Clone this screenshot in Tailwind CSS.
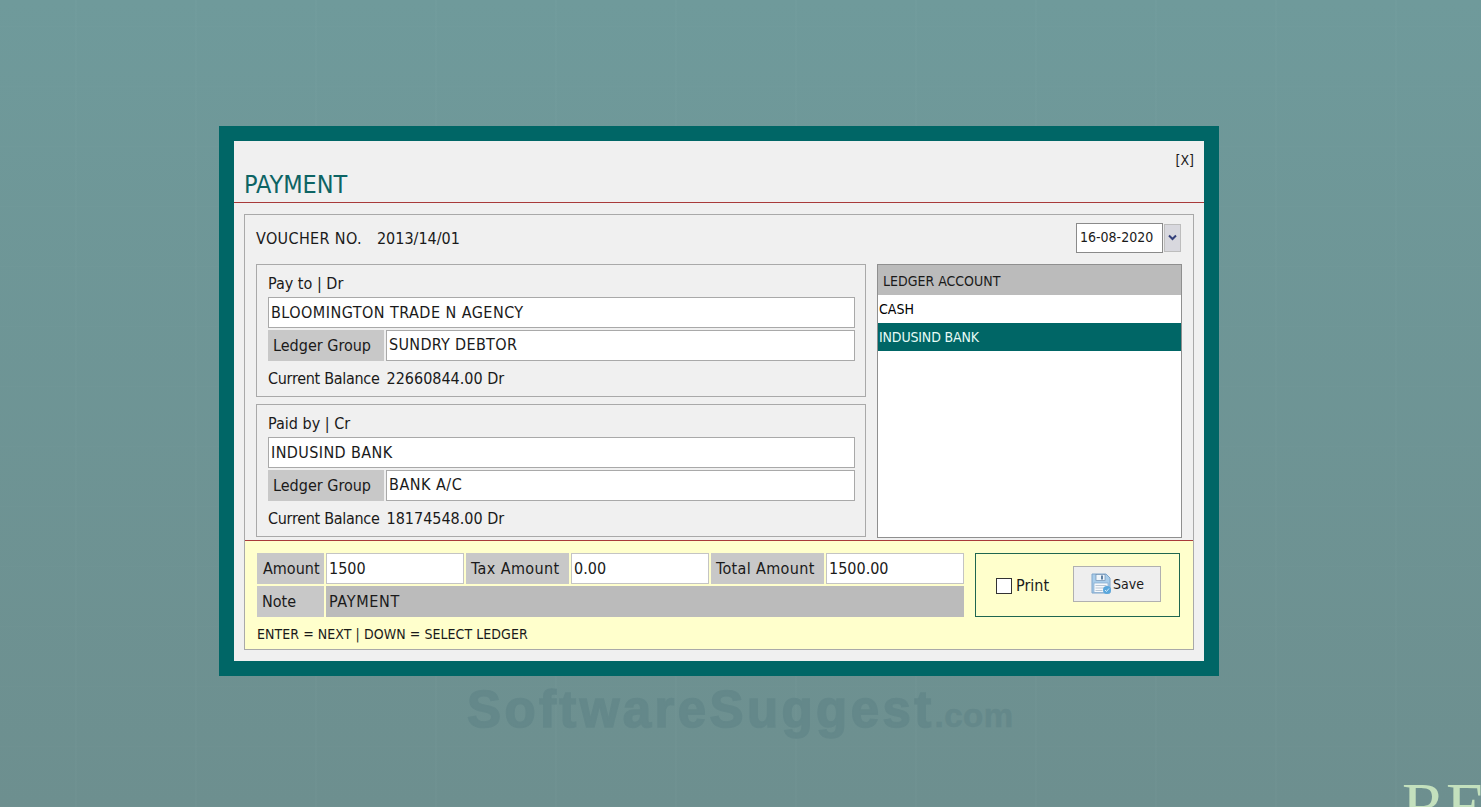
<!DOCTYPE html>
<html lang="en">
<head>
    <meta charset="UTF-8">
    <title>Payment</title>
    <script src="https://cdn.jsdelivr.net/npm/@tailwindcss/browser@4"></script>
</head>
<body class="relative w-[1481px] h-[807px] overflow-hidden bg-[linear-gradient(180deg,#6f9a9b,#6d8f8f)] pt-[126px] pl-[219px] font-['DejaVu_Sans_Condensed','Liberation_Sans',sans-serif] text-[16px] text-[#1a1a1a]">

    <!-- faint grid of the wallpaper -->
    <div class="absolute inset-0 bg-[repeating-linear-gradient(90deg,transparent_0,transparent_75px,#ffffff04_75px,#ffffff04_77px,transparent_77px,transparent_120px),repeating-linear-gradient(0deg,#ffffff03_0,#ffffff03_1px,transparent_1px,transparent_60px)]"></div>

    <!-- watermark -->
    <div class="absolute left-[467px] top-[677px] font-['Liberation_Sans',sans-serif] font-bold text-[#64888a] [-webkit-text-stroke:1.5px_#64888a] text-[51px] leading-[66px] tracking-[3.4px] whitespace-nowrap">SoftwareSuggest<span class="text-[33px] tracking-[0.5px] [-webkit-text-stroke:0.5px_#64888a]">.com</span></div>
    <div class="absolute left-[1402px] top-[773px] font-['Liberation_Serif',serif] text-[#c3e0bd] text-[66px] leading-[66px] whitespace-nowrap">RE</div>

    <!-- modal -->
    <div class="relative w-[1000px] h-[550px] border-[15px] border-[#006666] bg-[#f0f0f0] flex flex-col">
        <div class="h-[62px] shrink-0 border-b border-[#a83a3a] relative flex items-end px-[10px] pb-[1px]">
            <h1 class="text-[25px] leading-[32px] text-[#0d6464]">PAYMENT</h1>
            <span class="absolute right-[10px] top-[10px] text-[14px] leading-[18px]">[X]</span>
        </div>

        <div class="mx-[10px] mt-[11px] h-[436px] border border-[#a9a9a9] flex flex-col">
            <div class="flex-1 px-[11px] min-h-0">
                <div class="h-[49px] flex items-center pb-[2px]">
                    <span class="tracking-[0.36px]">VOUCHER NO.</span>
                    <span class="ml-[15px]">2013/14/01</span>
                    <div class="ml-auto mr-px mb-[2px] flex items-center">
                        <div class="w-[87px] h-[30px] border border-[#8a8a8a] bg-white flex items-center pl-[3px] text-[14px]">16-08-2020</div>
                        <div class="ml-px w-[17px] h-[28px] bg-[#d8d8de] border border-[#bdbdbd] flex items-center justify-center">
                            <svg width="9" height="7" viewBox="0 0 9 7" fill="none" stroke="#34407a" stroke-width="2"><path d="M1 1.5l3.5 3.5L8 1.5"/></svg>
                        </div>
                    </div>
                </div>

                <div class="flex gap-[11px]">
                    <div class="w-[610px] flex flex-col gap-[7px]">
                        <div class="h-[133px] border border-[#a9a9a9] pl-[11px] pr-[10px]">
                            <div class="h-[32px] flex items-end pb-px">Pay to | Dr</div>
                            <div class="h-[31px] border border-[#a9a9a9] bg-white flex items-center pl-[2px] tracking-[0.46px]">BLOOMINGTON TRADE N AGENCY</div>
                            <div class="mt-[2px] h-[31px] flex gap-[2px]">
                                <div class="w-[116px] bg-[#c8c8c8] flex items-center pl-[5px]">Ledger Group</div>
                                <div class="flex-1 border border-[#a9a9a9] bg-white flex items-center pl-[2px] pb-[2px] tracking-[0.32px]">SUNDRY DEBTOR</div>
                            </div>
                            <div class="h-[34px] flex items-center pt-[2px] tracking-[-0.3px]">Current Balance <span class="ml-[7px] tracking-normal">22660844.00 Dr</span></div>
                        </div>
                        <div class="h-[133px] border border-[#a9a9a9] pl-[11px] pr-[10px]">
                            <div class="h-[32px] flex items-end pb-px">Paid by | Cr</div>
                            <div class="h-[31px] border border-[#a9a9a9] bg-white flex items-center pl-[2px] tracking-[0.4px]">INDUSIND BANK</div>
                            <div class="mt-[2px] h-[31px] flex gap-[2px]">
                                <div class="w-[116px] bg-[#c8c8c8] flex items-center pl-[5px]">Ledger Group</div>
                                <div class="flex-1 border border-[#a9a9a9] bg-white flex items-center pl-[2px] pb-[2px] tracking-[0.5px]">BANK A/C</div>
                            </div>
                            <div class="h-[34px] flex items-center pt-[2px] tracking-[-0.3px]">Current Balance <span class="ml-[7px] tracking-normal">18174548.00 Dr</span></div>
                        </div>
                    </div>

                    <div class="w-[305px] h-[274px] border border-[#8f8f8f] bg-white text-[14px]">
                        <div class="h-[30px] bg-[#bbbbbb] flex items-center pl-[5px] pt-[2px]">LEDGER ACCOUNT</div>
                        <div class="h-[28px] flex items-center pl-px text-black">CASH</div>
                        <div class="h-[28px] flex items-center pl-px bg-[#006666] text-[#e6fbf6] tracking-[-0.15px]">INDUSIND BANK</div>
                    </div>
                </div>
            </div>

            <!-- footer -->
            <div class="h-[109px] shrink-0 border-t border-[#a83a3a] bg-[#ffffcc] px-[12px] pt-[12px] flex">
                <div class="w-[707px]">
                    <div class="flex gap-[2px] h-[31px]">
                        <div class="w-[67px] bg-[#c8c8c8] flex items-center pl-[6px]">Amount</div>
                        <div class="w-[138px] border border-[#c4c4c4] bg-white flex items-center pl-[2px]">1500</div>
                        <div class="w-[103px] bg-[#c8c8c8] flex items-center pl-[5px] tracking-[0.4px]">Tax Amount</div>
                        <div class="w-[138px] border border-[#c4c4c4] bg-white flex items-center pl-[2px]">0.00</div>
                        <div class="w-[113px] bg-[#c8c8c8] flex items-center pl-[5px] tracking-[0.35px]">Total Amount</div>
                        <div class="w-[138px] border border-[#c4c4c4] bg-white flex items-center pl-[2px]">1500.00</div>
                    </div>
                    <div class="flex gap-[2px] h-[31px] mt-[2px]">
                        <div class="w-[67px] bg-[#c8c8c8] flex items-center pl-[5px]">Note</div>
                        <div class="flex-1 bg-[#bbbbbb] flex items-center pl-[3px] tracking-[0.7px]">PAYMENT</div>
                    </div>
                    <div class="mt-[8px] text-[14px] leading-[18px] tracking-[0.06px]">ENTER = NEXT | DOWN = SELECT LEDGER</div>
                </div>
                <div class="ml-[11px] w-[205px] h-[64px] border border-[#1f6650] flex items-center pl-[20px]">
                    <div class="w-[16px] h-[16px] mt-px border border-[#333] bg-white"></div>
                    <span class="ml-[4px] mt-[2px]">Print</span>
                    <div class="ml-auto mr-[18px] mb-[2px] w-[88px] h-[36px] border border-[#b0b0b0] bg-[#eeeeee] flex items-center pl-[16px] gap-[1px] text-[14px]">
                        <svg width="22" height="22" viewBox="0 0 22 22">
                            <path d="M2 1h14l4 4v15H2z" fill="#a9cdea" stroke="#7fa6cc"/>
                            <rect x="6" y="1.5" width="9" height="6" fill="#eef5fb" stroke="#6f8fb0" stroke-width=".7"/>
                            <rect x="11" y="2.5" width="2" height="4" fill="#5f7fa0"/>
                            <rect x="4" y="10" width="14" height="9.5" fill="#f6f9fc" stroke="#7fa6cc" stroke-width=".7"/>
                            <path d="M5.5 12.5h11M5.5 15h11M5.5 17.5h7" stroke="#a9b9c9" stroke-width=".8"/>
                            <circle cx="17" cy="17" r="4" fill="#5aa7dc"/>
                            <path d="M15 17l1.5 1.5L19 15.5" fill="none" stroke="#dff0fb" stroke-width=".9"/>
                        </svg>
                        <span>Save</span>
                    </div>
                </div>
            </div>
        </div>
    </div>
</body>
</html>
